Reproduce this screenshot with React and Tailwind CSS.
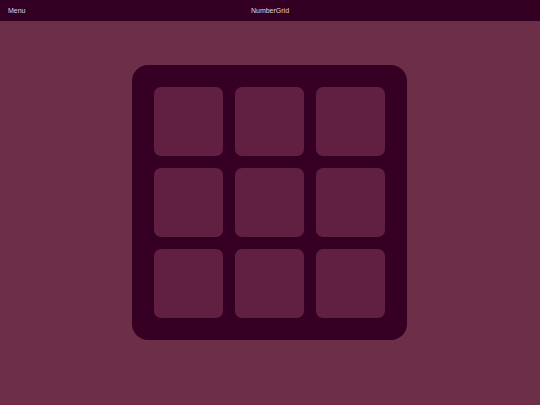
export default function App() {
  const cells = Array.from({ length: 9 });
  return (
    <div className="w-[540px] h-[405px] flex flex-col bg-[#6d2f48]" style={{ fontFamily: '"Liberation Sans", Arial, sans-serif' }}>
      <div className="h-[21px] shrink-0 bg-[#330023] flex items-center relative px-[8px] pt-[1px] text-[7px] text-[#e2d2da]">
        <span>Menu</span>
        <span className="absolute left-1/2 -translate-x-1/2">NumberGrid</span>
      </div>
      <div className="flex-1 flex justify-center pt-[44px] pr-[1px]">
        <div className="w-[275px] h-[275px] bg-[#360024] rounded-[16px] p-[22px] grid grid-cols-3 grid-rows-3 gap-[12px]">
          {cells.map((_, i) => (
            <div key={i} className="bg-[#611f42] rounded-[7px]" />
          ))}
        </div>
      </div>
    </div>
  );
}
